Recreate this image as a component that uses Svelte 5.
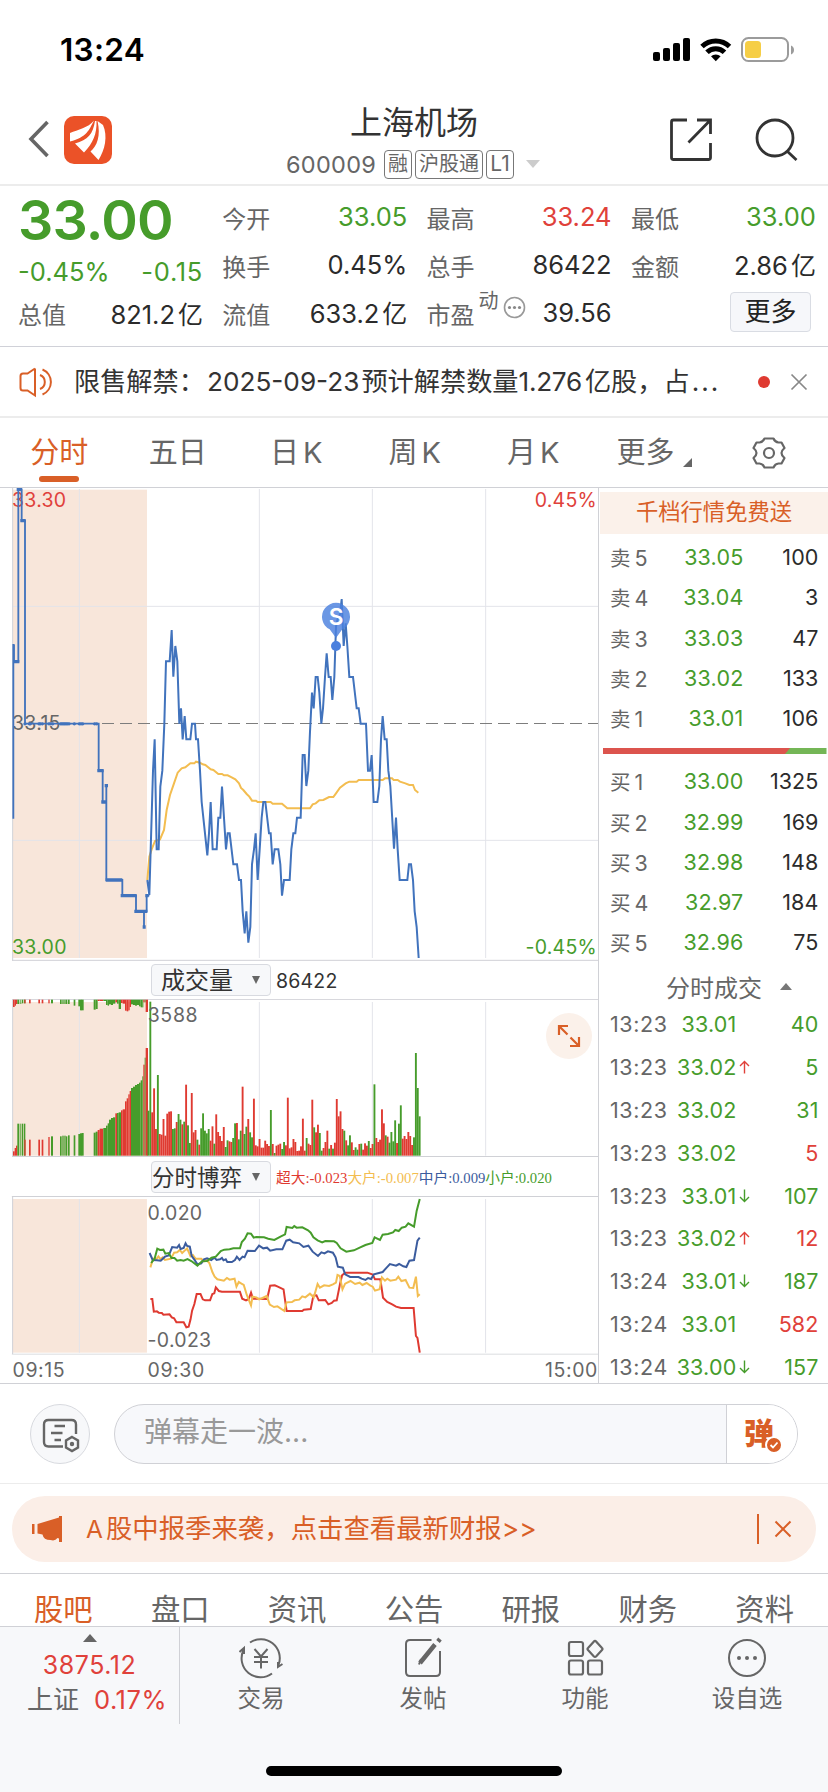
<script>
  const quotes = [
    [['今开', '33.05', 'down'], ['最高', '33.24', 'up'], ['最低', '33.00', 'down']],
    [['换手', '0.45%', ''], ['总手', '86422', ''], ['金额', '2.86亿', '']]
  ];
  const periods = ['分时', '五日', '日K', '周K', '月K'];
  const asks = [['卖5', '33.05', 100], ['卖4', '33.04', 3], ['卖3', '33.03', 47], ['卖2', '33.02', 133], ['卖1', '33.01', 106]];
  const bids = [['买1', '33.00', 1325], ['买2', '32.99', 169], ['买3', '32.98', 148], ['买4', '32.97', 184], ['买5', '32.96', 75]];
  const trades = [
    ['13:23', '33.01', '', 40, 'down'],
    ['13:23', '33.02', 'u', 5, 'down'],
    ['13:23', '33.02', '', 31, 'down'],
    ['13:23', '33.02', '', 5, 'up'],
    ['13:23', '33.01', 'd', 107, 'down'],
    ['13:23', '33.02', 'u', 12, 'up'],
    ['13:24', '33.01', 'd', 187, 'down'],
    ['13:24', '33.01', '', 582, 'up'],
    ['13:24', '33.00', 'd', 157, 'down']
  ];
  const sections = ['股吧', '盘口', '资讯', '公告', '研报', '财务', '资料'];

  const auctionPath = 'M40 1016V495H44M42 495V545H55V28H65V122H75V731H296V872H308V966H319V917V1200H367V1247H408V1294H432V1341V1294H440V1247H448';
  const auctionTicks = 'M50 28H66M61 122H77M40 545H58M292 872H311M304 966H320M314 917H324M317 1200H367M362 1247H410M403 1294H442M428 1341H437M436 1247H446';
  const dots = [75, 88, 91, 117, 121, 127, 147, 152, 158, 182, 186, 190, 194, 198, 202, 207, 223, 238, 243, 248, 284, 290];
  const priceLine =
    '442,1200 448,1245 459,872 464,778 470,1108 476,1108 481,920 487,872 493,731 498,544 509,544 515,450 520,590 526,498 532,544 538,731 543,685 548,778 554,708 559,778 571,778 576,731 585,731 588,778 594,778 600,872 605,966 622,1126 627,1060 632,966 638,1108 650,1108 655,1013 661,1013 666,920 678,1108 683,1060 689,1060 700,1153 711,1153 717,1200 723,1200 728,1294 734,1360 739,1294 745,1388 751,1341 756,1153 762,1108 767,1060 773,1200 779,1108 785,1013 790,966 796,966 807,1060 812,1060 818,1153 824,1108 835,1108 841,1153 846,1247 852,1200 869,1200 874,1108 880,1060 886,1060 891,1013 902,1013 908,825 914,825 919,918 925,872 930,755 936,638 941,685 947,591 953,591 958,638 964,731 969,685 975,591 980,520 986,591 992,591 997,660 1003,591 1008,440 1014,412 1020,404 1025,357 1031,498 1037,430 1042,498 1048,591 1059,591 1070,685 1076,685 1082,731 1098,731 1104,872 1110,872 1115,825 1121,966 1132,966 1138,918 1143,778 1148,708 1154,778 1160,778 1165,872 1171,918 1182,1106 1188,1013 1193,1108 1199,1200 1222,1200 1227,1153 1233,1153 1239,1200 1244,1294 1250,1341 1256,1434';
  const averageLine =
    '442,1200 448,1130 455,1108 465,1083 480,1078 492,1050 500,990 510,945 522,910 533,878 545,865 556,862 571,850 583,850 588,845 600,848 608,853 616,855 632,868 640,870 655,882 666,882 672,886 683,886 695,892 706,898 717,910 723,924 730,930 740,942 748,950 756,962 768,962 773,966 812,966 818,971 846,971 862,985 930,985 938,973 947,970 958,961 970,960 987,951 1000,951 1008,940 1020,923 1037,910 1048,905 1070,905 1076,900 1148,900 1155,895 1176,895 1181,900 1193,900 1200,905 1216,910 1228,915 1239,915 1245,930 1255,938';

  const volumes =
    'g483 g156 r488 r416 r538 g376 r553 r555 r508 r558 r492 r486 r485 g538 g536 r517 g493 g510 r524 g516 r405 g527 g580 r430 r548 r541 g570 r585 g536 g491 g543 g551 g538 r573 r530 g582 r494 r547 r559 r574 r532 g592 g572 r575 r577 g565 g521 r520 g569 g543 r411 g553 g531 r508 g548 g563 r447 r587 r590 r568 r594 r594 r573 r583 r589 g481 r583 g610 r588 r585 r582 g598 g577 r587 r444 r596 r593 r568 r577 r604 r603 r590 r507 r603 g565 r582 r586 r450 g533 r548 r525 g550 g603 r595 r577 r543 g597 r586 g597 r579 r448 r500 r485 r538 g543 r572 g587 g557 r578 r601 g593 g600 r583 g582 r600 r581 r588 g574 r595 r583 g404 r565 r577 r570 r479 r521 g557 r561 g579 g547 g575 g512 r580 g522 g467 r567 r559 r568 r547 r559 r586 g563 g310 g415 g500'.split(' ');

  // Auction bars: [colour, left, width, top of the lower bar, end of the hanging bar]
  const auction = [
    ['r', 39, 5, 605, 172], ['r', 44, 4, 595, 168], ['r', 48, 4, 588, 163],
    ['g', 52, 6, 522, 163], ['g', 61, 3, 522, 163], ['g', 66, 3, 522, 161], ['g', 71, 5, 522, 161],
    ['r', 73, 4, 570, 161], ['r', 87, 5, 570, 161], ['r', 115, 5, 570, 161], ['r', 125, 5, 570, 161], ['r', 145, 4, 562, 161],
    ['g', 153, 6, 560, 161], ['g', 180, 5, 560, 163], ['g', 187, 4, 558, 163], ['g', 193, 4, 558, 163], ['g', 198, 4, 560, 163], ['g', 204, 5, 557, 163],
    ['g', 221, 5, 557, 168], ['g', 235, 5, 553, 170], ['g', 240, 6, 551, 182], ['g', 245, 6, 550, 182],
    ['g', 281, 6, 549, 180], ['g', 287, 6, 546, 178], ['r', 293, 6, 541, 154], ['r', 299, 11, 537, 154],
    ['g', 310, 8, 535, 154], ['g', 318, 5, 528, 166], ['g', 323, 4, 521, 168], ['g', 327, 6, 510, 164], ['g', 333, 6, 505, 166], ['g', 339, 7, 503, 162],
    ['r', 346, 5, 491, 158], ['g', 351, 5, 490, 162], ['g', 356, 7, 488, 178], ['r', 363, 5, 482, 160], ['r', 368, 7, 479, 162],
    ['r', 375, 5, 455, 183], ['r', 380, 5, 446, 185], ['r', 385, 4, 434, 182], ['r', 389, 4, 424, 172],
    ['g', 393, 6, 415, 164], ['g', 399, 6, 411, 166], ['g', 405, 6, 406, 168], ['g', 411, 6, 403, 166], ['g', 417, 5, 399, 170], ['g', 422, 5, 392, 173],
    ['g', 427, 3, 380, 173], ['r', 430, 4, 345, 158], ['g', 434, 3, 324, 158], ['r', 437, 7, 295, 187]
  ];
  const tone = { r: '#df3a31', g: '#469c2b' };

  const flows = [
    ['#df3a31', '393,357 398,357 402,395 410,394 415,398 423,399 427,404 443,403 449,412 455,415 461,427 480,427 487,442 493,440 498,418 502,392 508,372 514,342 524,342 530,358 536,361 549,361 555,342 560,340 564,322 572,333 580,335 627,335 633,356 643,361 650,357 656,338 661,356 698,357 706,317 718,316 726,320 741,328 749,393 790,393 794,389 812,387 819,347 827,346 833,361 850,360 858,373 867,369 873,362 880,361 889,310 894,286 902,278 960,278 974,284 980,298 994,298 1001,353 1012,366 1025,373 1035,380 1048,384 1081,384 1087,468 1091,474 1097,518'],
    ['#f3bd50', '393,262 400,236 408,238 414,229 419,237 425,232 431,240 447,236 455,218 463,217 470,210 476,219 489,205 498,229 504,225 511,236 526,236 533,244 540,240 547,249 555,276 561,290 568,298 585,302 593,294 600,299 613,296 618,320 624,306 631,311 637,315 645,345 656,376 660,350 670,352 677,358 686,354 697,348 705,374 716,381 725,379 743,393 749,367 763,366 770,361 782,359 790,349 798,352 810,341 820,352 830,312 836,323 847,316 860,318 870,313 878,308 882,285 888,288 895,328 902,311 916,303 928,312 940,308 947,315 958,309 968,317 974,320 980,332 992,328 998,292 1006,302 1012,296 1020,302 1035,299 1041,290 1049,303 1060,300 1070,323 1080,324 1087,290 1092,348 1097,343'],
    ['#3b5c9e', '391,219 399,240 410,241 420,242 431,230 441,226 450,201 463,203 468,195 472,207 480,204 485,190 489,198 496,200 501,228 508,239 516,253 526,250 533,238 541,235 552,240 560,233 566,240 575,238 580,234 584,241 590,238 594,246 606,246 614,240 619,230 626,240 634,230 639,232 647,212 666,213 677,197 688,205 698,203 706,212 722,208 738,208 748,182 757,179 766,187 782,190 793,201 806,197 817,215 831,228 840,217 848,220 857,214 870,218 877,232 883,260 896,263 902,283 915,291 937,291 945,296 955,300 962,294 970,297 977,283 1000,276 1011,262 1019,252 1035,257 1043,252 1054,259 1062,261 1070,242 1082,240 1091,182 1097,173'],
    ['#469c2b', '395,249 404,236 411,206 418,210 427,209 432,221 441,219 448,234 456,234 463,242 472,240 480,242 490,237 500,243 516,257 528,244 541,243 553,233 564,230 577,213 586,209 600,208 610,205 627,205 632,186 640,176 647,160 656,161 663,173 670,171 690,172 701,176 717,180 733,170 745,163 749,141 764,144 769,138 775,143 790,142 805,151 812,158 819,172 830,181 842,187 850,183 873,184 880,189 890,205 905,215 925,211 940,203 955,195 973,189 979,172 993,180 1000,164 1014,162 1027,157 1033,150 1042,153 1050,143 1060,140 1067,130 1082,140 1089,92 1097,57']
  ];
</script>

<div class="screen">
  <div class="status">
    <span class="clock">13:24</span>
    <svg width="144" height="28" viewBox="652 36 144 28">
      <rect x="653" y="52" width="7" height="9" rx="2" /><rect x="663" y="48" width="7" height="13" rx="2" />
      <rect x="673" y="43" width="7" height="18" rx="2" /><rect x="683" y="38" width="7" height="23" rx="2" />
      <g fill="none" stroke="#000" stroke-width="5"><path d="M702 46.500A20 20 0 0 1 729.500 46.500" /><path d="M707 52.200A12.500 12.500 0 0 1 724.500 52.200" /></g>
      <path d="M711 56.300a7 7 0 0 1 9.600 0L715.800 61.300z" />
      <rect x="742" y="38" width="46" height="23" rx="6.500" fill="none" stroke="#9b9b9b" stroke-width="2" />
      <rect x="745" y="41" width="16" height="17" rx="3.500" fill="#f6ce46" /><path d="M791 45.500c4 1.500 4 7.500 0 9z" fill="#9b9b9b" />
    </svg>
  </div>

  <header>
    <svg class="back" width="22" height="38" viewBox="0 0 22 38"><path d="M19.500 2L3 19 19.500 36" fill="none" stroke="#666" stroke-width="3.600" /></svg>
    <svg class="logo" width="48" height="48" viewBox="0 0 48 48">
      <rect width="48" height="48" rx="10" fill="#eb5228" />
      <path fill="#fff" d="M6 17C14 13.500 24 12 30 4.500C25 14 23 21 6 25.500zM31 5C29 18 24 24 11 27.500L20 36.500C29 27 33 18 32.500 5zM33.500 5C37 20 33 30 26.500 35.500L34.500 44C41 34 44 20 39 9z" />
    </svg>
    <div class="title">
      <h1>上海机场</h1>
      <div class="code"><span>600009</span><b>融</b><b>沪股通</b><b class="lv">L1</b><i></i></div>
    </div>
    <svg class="share" width="46" height="46" viewBox="668 117 46 46" fill="none" stroke="#333" stroke-width="2.800">
      <path d="M687 120H673.500Q671.500 120 671.500 122V157.500Q671.500 159.500 673.500 159.500H708.500Q710.500 159.500 710.500 157.500V143M697 120H710.500V134M710 120.500L688.500 142.500" />
    </svg>
    <svg class="search" width="44" height="44" viewBox="755 118 44 44" fill="none" stroke="#333" stroke-width="2.800"><circle cx="775" cy="138" r="18" /><path d="M787.500 151.500L796.500 160" /></svg>
  </header>

  <section class="quote">
    <div class="col">
      <div class="price">33.00</div>
      <div class="cell change down"><span>-0.45%</span><span class="diff">-0.15</span></div>
      <div class="cell"><label>总值</label><span>821.2<em>亿</em></span></div>
    </div>
    {#each [0, 1, 2] as c}
      <div class="col">
        {#each quotes as row}
          <div class="cell"><label>{row[c][0]}</label><span class={row[c][2]}>{row[c][1].replace('亿', '')}{#if row[c][1].endsWith('亿')}<em>亿</em>{/if}</span></div>
        {/each}
        {#if c === 0}
          <div class="cell"><label>流值</label><span>633.2<em>亿</em></span></div>
        {:else if c === 1}
          <div class="cell"><label class="pe">市盈<sup>动</sup><svg width="23" height="23" viewBox="0 0 23 23"><circle cx="11.500" cy="11.500" r="10" fill="none" stroke="#999" stroke-width="1.600" /><g fill="#888"><circle cx="6.500" cy="11.500" r="1.600" /><circle cx="11.500" cy="11.500" r="1.600" /><circle cx="16.500" cy="11.500" r="1.600" /></g></svg></label><span>39.56</span></div>
        {:else}
          <div class="cell end"><button>更多</button></div>
        {/if}
      </div>
    {/each}
  </section>

  <section class="notice">
    <svg width="36" height="32" viewBox="18 365 36 32" fill="none" stroke="#d95f27" stroke-width="2">
      <path d="M35 367.500V394.500L27.500 389.500H23Q20.500 389.500 20.500 387V375Q20.500 372.500 23 372.500H27.500L35 367.500M40 374A7.500 7.500 0 0 1 40 388M42.500 368.500A13.500 13.500 0 0 1 42.500 393.500" />
    </svg>
    <p>限售解禁：<span>2025-09-23</span>预计解禁数量<span class="amount">1.276</span>亿股，占<span class="dots">...</span></p>
    <i></i>
    <svg width="18" height="18" viewBox="0 0 18 18"><path d="M1.500 1.500L16.500 16.500M16.500 1.500L1.500 16.500" stroke="#888" stroke-width="1.700" /></svg>
  </section>

  <nav class="periods">
    {#each periods as p, i}
      <span class:on={i === 0}>{p.replace('K', '')}{#if p.endsWith('K')}<em>K</em>{/if}</span>
    {/each}
    <span class="more">更多<svg width="9" height="9" viewBox="0 0 9 9"><path d="M9 0V9H0z" fill="#666" /></svg></span>
    <svg class="gear" width="34" height="34" viewBox="-17 -17 34 34" fill="none" stroke="#666" stroke-width="2.200">
      <path d="M-4.500-14.500H4.500Q6-10.800 9.500-10.500L12.500-10.500 15.500-5Q12.500-2.500 12.500 0T15.500 5L12.500 10.500 9.500 10.500Q6 10.800 4.500 14.500H-4.500Q-6 10.800-9.500 10.500L-12.500 10.500-15.500 5Q-12.500 2.500-12.500 0T-15.500-5L-12.500-10.500-9.500-10.500Q-6-10.800-4.500-14.500z" stroke-linejoin="round" /><circle r="5" />
    </svg>
  </nav>

  <main>
    <div class="charts">
      <svg class="plot" width="598" height="473" viewBox="0 24 1794 1419">
        <rect x="39" y="29" width="402" height="1405" fill="#f8e6da" />
        <path d="M238 27V1434M778 27V1434M1117 27V1434M1457 27V1434M39 379H1794M39 1081H1794" fill="none" stroke="#e3e4ea" stroke-width="3" />
        <path d="M38 24V1442M36 1441H1794" stroke="#d0d1d6" stroke-width="3" />
        <path d="M306 730.500H1794" stroke="#7d7d7d" stroke-width="3.600" stroke-dasharray="36 18" />
        <g font-size="58.500" letter-spacing=".8">
          <text x="36" y="81" fill="#e0413a">33.30</text><text x="36" y="751" fill="#666">33.15</text><text x="36" y="1421" fill="#469c2b">33.00</text>
          <text x="1791" y="81" fill="#e0413a" text-anchor="end">0.45%</text><text x="1791" y="1421" fill="#469c2b" text-anchor="end">-0.45%</text>
        </g>
        <polyline points={averageLine} fill="none" stroke="#f3bd50" stroke-width="6" />
        <path d={auctionPath} fill="none" stroke="#4173bd" stroke-width="5.500" />
        <path d={auctionTicks} fill="none" stroke="#4173bd" stroke-width="10" />
        {#each dots as x}<circle cx={x} cy="731.500" r="5" fill="#4173bd" />{/each}
        <polyline points={priceLine} fill="none" stroke="#4173bd" stroke-width="6" />
        <g fill="#4a80de">
          <path d="M1008 474L989 448A42 42 0 1 1 1027 448z" opacity=".82" /><circle cx="1008" cy="498" r="15" />
        </g>
        <text x="1008" y="434" font-size="68" font-weight="600" fill="#fff" text-anchor="middle">S</text>
      </svg>

      <div class="bar"><div class="pick">成交量<i></i></div><span class="total">86422</span></div>

      <div class="layer">
        <svg class="plot" width="598" height="158" viewBox="0 148 1794 474">
          <rect x="39" y="157" width="402" height="461" fill="#f8e6da" />
          <path d="M238 157V618M778 157V618M1117 157V618M1457 157V618" stroke="#e3e4ea" stroke-width="3" />
          <path d="M36 149H1794M38 148V622M36 620.500H1794" stroke="#d0d1d6" stroke-width="3" />
          {#each auction as [k, x, w, top, end]}
            <rect {x} y={top} width={w} height={618 - top} fill={tone[k]} /><rect {x} y="150" width={w} height={end - 150} fill={tone[k]} />
          {/each}
          {#each volumes as v, i}
            <rect x={442.500 + i * 5.650} y={+v.slice(1)} width="5.650" height={618 - +v.slice(1)} fill={tone[v[0]]} />
          {/each}
          <text x="443" y="216" font-size="58.500" letter-spacing="2" fill="#666">3588</text>
        </svg>
        <div class="expand"><svg width="24" height="24" viewBox="0 0 24 24" fill="none" stroke="#d95f27" stroke-width="2.200"><path d="M2 11V2H11M2 2L10.500 10.500M22 13V22H13M22 22L13.500 13.500" /></svg></div>
      </div>

      <div class="bar second"><div class="pick tight">分时博弈<i></i></div><span class="legend"><b class="c0">超大:-0.023</b><b class="c1">大户:-0.007</b><b class="c2">中户:0.009</b><b class="c3">小户:0.020</b></span></div>

      <div class="layer">
        <svg class="plot" width="598" height="159" viewBox="0 48 1562.800 477" preserveAspectRatio="none">
          <rect x="34" y="57" width="350" height="461" fill="#f8e6da" />
          <g fill="none">
            <path d="M207.500 57V518M678 57V518M973 57V518M1269 57V518" stroke="#e3e4ea" stroke-width="2.700" />
            <path d="M31 49.500H1563M33 48V522M31 522.500H1563" stroke="#d0d1d6" stroke-width="2.700" />
          </g>
          {#each flows as [color, points]}
            <polyline {points} fill="none" stroke={color} stroke-width="2" vector-effect="non-scaling-stroke" />
          {/each}
        </svg>
        <span class="hi">0.020</span><span class="lo">-0.023</span>
      </div>
      <div class="axis"><span>09:15</span><span>09:30</span><span>15:00</span></div>
    </div>

    <aside>
      <div class="promo">千档行情免费送</div>
      <div class="book">
        {#each asks as [n, p, v]}<div><span>{n[0]}<em>{n[1]}</em></span><b>{p}</b><i>{v}</i></div>{/each}
      </div>
      <svg class="ratio" width="225" height="6"><path d="M0 0H223.500V6H0z" fill="#74b656" /><path d="M0 0H187L182 6H0z" fill="#dc544d" /></svg>
      <div class="book">
        {#each bids as [n, p, v]}<div><span>{n[0]}<em>{n[1]}</em></span><b>{p}</b><i>{v}</i></div>{/each}
      </div>
      <div class="deals">分时成交<i></i></div>
      <div class="trades">
        {#each trades as [t, p, dir, v, side]}
          <div><span>{t}</span><b>{p}</b>
            <svg width="11" height="14" viewBox="0 0 11 14" fill="none" stroke-width="1.400">
              {#if dir === 'u'}<path d="M5.500 13.500V2M1 6L5.500 1.500 10 6" stroke="#e0413a" />{:else if dir === 'd'}<path d="M5.500 0.500V12M1 8L5.500 12.500 10 8" stroke="#469c2b" />{/if}
            </svg>
            <i class={side}>{v}</i></div>
        {/each}
      </div>
    </aside>
  </main>

  <section class="danmaku">
    <div class="setting">
      <svg width="40" height="40" viewBox="40 1414 40 40" fill="none" stroke="#666" stroke-width="2.400">
        <path d="M63 1446.500H48.500Q44 1446.500 44 1442V1424.500Q44 1420 48.500 1420H71.500Q76 1420 76 1424.500V1434M54.500 1426H65M51 1433H62.500M54.500 1440H61" />
        <path d="M72 1437L78 1440.500V1447.500L72 1451 66 1447.500V1440.500z" /><circle cx="72" cy="1444" r="1" />
      </svg>
    </div>
    <div class="input"><span>弹幕走一波...</span>
      <div class="toggle">弹<svg width="18" height="18" viewBox="-9 -9 18 18"><circle r="8" fill="#d95f27" stroke="#fff" stroke-width="2" /><path d="M-3.500 0L-1 2.500 3.500-2.500" fill="none" stroke="#fff" stroke-width="1.800" /></svg></div>
    </div>
  </section>

  <section class="promobar">
    <div>
      <svg width="32" height="28" viewBox="31 1515 32 28" fill="#d95f27"><path d="M32 1524H34.500V1534H32zM37.500 1524L59 1517.500V1516H62V1542H59V1538.500L57.500 1538Q55 1541.500 50.500 1540Q43.500 1540 42.500 1534.500L37.500 1533.500z" /></svg>
      <p><em>A</em>股中报季来袭，点击查看最新财报<span>&gt;&gt;</span></p>
      <i></i>
      <svg width="18" height="18" viewBox="0 0 18 18"><path d="M1.500 1.500L16.500 16.500M16.500 1.500L1.500 16.500" stroke="#d95f27" stroke-width="2" /></svg>
    </div>
  </section>

  <nav class="sections">
    {#each sections as s, i}<span class:on={i === 0}>{s}</span>{/each}
  </nav>

  <footer>
    <div class="actions">
      <div class="index"><i></i><b>3875.12</b><p>上证<b>0.17%</b></p></div>
      <div class="act">
        <svg width="44" height="42" viewBox="-22 -21 44 42" fill="none" stroke="#666" stroke-width="2">
          <path d="M-11-15.500A19 19 0 0 1 17.500 7M21.500 6L17 9V4M11 15.500A19 19 0 0 1-17.500-8M-21.500-6L-17-10V-4M-6.500-9L0-1.500 6.500-9M0-1.500V10.500M-7-1H7M-7 4H7" />
        </svg><span>交易</span>
      </div>
      <div class="act">
        <svg width="44" height="42" viewBox="-22 -21 44 42" fill="none" stroke="#666" stroke-width="2">
          <path d="M8.500-18H-13Q-17-18-17-14V14Q-17 18-13 18H13Q17 18 17 14V-7" /><path d="M-3 5L12-13.500M15-16.500L17-19" stroke-width="4.500" /><path d="M-4 6.500L-2 1" />
        </svg><span>发帖</span>
      </div>
      <div class="act">
        <svg width="44" height="42" viewBox="-22 -21 44 42" fill="none" stroke="#666" stroke-width="2.200">
          <rect x="-16" y="-16" width="14" height="14" rx="2" /><rect x="-16" y="2.500" width="14" height="14" rx="2" /><rect x="3" y="2.500" width="14" height="14" rx="2" /><path d="M8.700-16.300Q10-17.800 11.300-16.300L17-10Q18-9 17-8L11.300-1.800Q10-.5 8.700-1.800L3-8Q2-9 3-10z" />
        </svg><span>功能</span>
      </div>
      <div class="act">
        <svg width="44" height="42" viewBox="-22 -21 44 42"><circle r="18" fill="none" stroke="#666" stroke-width="2" /><g fill="#666"><circle cx="-8" r="2" /><circle r="2" /><circle cx="8" r="2" /></g></svg><span>设自选</span>
      </div>
    </div>
    <div class="home"></div>
  </footer>
</div>

<style>
  * { box-sizing: border-box; }
  .screen { width: 828px; height: 1792px; display: flex; flex-direction: column; overflow: hidden; background: #fff; font-family: Inter, 'Noto Sans CJK SC', sans-serif; color: #2b2b2b; }
  svg { display: block; flex: none; }
  em, i { font-style: normal; }
  b { font-weight: 400; }
  h1, p { margin: 0; font-weight: 400; }
  .up { color: #e0413a; }
  .down { color: #469c2b; }

  .status { height: 100px; display: flex; justify-content: space-between; align-items: flex-start; padding: 36px 32px 0 60px; color: #000; }
  .clock { font-size: 31.500px; line-height: 28px; font-weight: 600; letter-spacing: .3px; }

  header { height: 86px; border-bottom: 2px solid #ececec; display: flex; align-items: flex-start; padding-left: 28px; }
  .back { margin-top: 20px; }
  .logo { margin: 16px 0 0 14px; }
  .title { width: 326px; margin: 4px 0 0 138px; }
  h1 { width: 328px; text-align: center; font-size: 32px; line-height: 38px; color: #333; }
  .code { display: flex; align-items: center; height: 30px; margin-top: 7px; margin-left: 36px; color: #666; font-size: 23.500px; white-space: nowrap; }
  .code span { width: 98px; letter-spacing: .3px; }
  .code b { height: 29px; border: 1.500px solid #777; border-radius: 4px; padding: 0 3px; font-size: 20px; line-height: 26px; margin-right: 3px; }
  .code .lv { font-size: 21px; width: 28px; text-align: center; padding: 0; }
  .code i { border: 7px solid transparent; border-top: 8px solid #ccc; border-bottom: 0; margin-left: 9px; }
  .share { margin: 17px 0 0 92px; }
  .search { margin: 18px 0 0 41px; }

  .quote { height: 161px; border-bottom: 1px solid #d0d1d8; display: grid; grid-template-columns: repeat(4, 185px); column-gap: 19.300px; padding: 6px 0 0 18px; }
  .col { display: flex; flex-direction: column; }
  .price { height: 55px; font-size: 55.500px; line-height: 55px; font-weight: 600; color: #469c2b; letter-spacing: -.8px; }
  .cell { height: 48px; display: flex; justify-content: space-between; align-items: center; font-size: 25.500px; white-space: nowrap; }
  .cell label { font-size: 24px; color: #666; position: relative; top: 1px; }
  .cell em { font-size: 25px; margin-left: 3px; }
  .col:first-child .cell { height: 41px; }
  .col:first-child .change { margin-top: 4px; }
  .diff { letter-spacing: .7px; }
  .pe { display: flex; align-items: center; }
  .pe sup { font-size: 20px; line-height: 20px; margin: -24px 4px 0 4px; }
  .pe svg { margin-top: -11px; }
  .end { justify-content: flex-end; padding-right: 5px; }
  button { width: 81px; height: 40px; margin-top: -1px; padding: 0; border: 1.500px solid #d9dce3; border-radius: 4px; background: #f6f7fa; color: #222; font: 26px/34px Inter, 'Noto Sans CJK SC', sans-serif; }

  .notice { height: 71px; border-bottom: 2px solid #ececec; display: flex; align-items: center; padding-left: 18px; }
  .notice p { width: 650px; margin-left: 20px; font-size: 26.200px; line-height: 40px; color: #333; white-space: nowrap; }
  .notice p span { margin: 0 2px; }
  .notice p .amount { margin: 0 3px 0 0; letter-spacing: -.3px; }
  .notice p .dots { letter-spacing: 2px; }
  .notice i { width: 12px; height: 12px; border-radius: 50%; background: #df3a31; margin: 0 20px 0 34px; }

  .periods { height: 70px; border-bottom: 1px solid #d0d1d6; display: flex; align-items: center; color: #666; font-size: 29px; }
  .periods span { position: relative; width: 118.500px; text-align: center; line-height: 68px; }
  .periods em { margin-left: 4px; font-size: 29px; }
  .periods .on { color: #d95f27; }
  .periods .on::after { content: ''; position: absolute; left: 39px; bottom: 5px; width: 40px; height: 6px; border-radius: 3px; background: #d95f27; }
  .periods .more { margin-left: 14px; text-align: left; padding-left: 10px; display: flex; align-items: center; }
  .more svg { margin: 20px 0 0 8px; }
  .gear { margin-left: 27px; }

  main { height: 896px; border-bottom: 1px solid #d0d1d6; display: flex; overflow: hidden; }
  .charts { width: 599px; border-right: 1px solid #d0d1d6; }
  .bar { height: 38px; display: flex; align-items: center; padding-left: 151px; }
  .bar.second { height: 39px; }
  .pick { width: 120px; height: 32px; border: 1.500px solid #d8dae0; border-radius: 4px; background: #f7f8fa; font-size: 24px; line-height: 28px; padding: 2px 10px 0 9px; color: #333; display: flex; align-items: center; white-space: nowrap; justify-content: space-between; }
  .pick.tight { padding-left: 0; font-size: 22.500px; }
  .pick i { border: 4.500px solid transparent; border-top: 8px solid #666; border-bottom: 0; margin-top: -2px; }
  .total { font-size: 19.500px; margin: 2px 0 0 5px; color: #333; letter-spacing: .2px; }
  .legend { display: flex; margin-left: 5px; font: 14.700px 'Liberation Serif', 'Noto Sans CJK SC', serif; white-space: nowrap; }
  .c0 { color: #df3a31; } .c1 { color: #f3bd50; } .c2 { color: #3b5c9e; } .c3 { color: #469c2b; }
  .layer { position: relative; }
  .expand { position: absolute; left: 546px; top: 14px; width: 46px; height: 46px; border-radius: 50%; background: #fbf1ea; display: grid; place-items: center; }
  .hi, .lo { position: absolute; left: 147.500px; font-size: 19.500px; line-height: 20px; color: #666; letter-spacing: .3px; }
  .hi { top: 6.500px; }
  .lo { bottom: 5px; }
  .axis { height: 28px; display: flex; padding-left: 12.500px; font-size: 19.500px; line-height: 30px; color: #666; letter-spacing: .6px; }
  .axis span { width: 135px; }
  .axis span:last-child { flex: 1; text-align: right; }

  aside { width: 229px; }
  .promo { margin: 4px 0 3px 1px; height: 42px; background: #fbf1ea; color: #d95f27; font-size: 22.300px; line-height: 39px; text-align: center; }
  .book div { height: 40.250px; display: grid; grid-template-columns: 60px 73.500px 75px; padding-left: 11px; align-items: center; font-size: 21.500px; white-space: nowrap; }
  .book span { color: #666; font-size: 20.500px; }
  .book em { margin-left: 4px; font-size: 21.500px; }
  .book b { color: #469c2b; text-align: right; letter-spacing: .2px; }
  .book i, .trades i { text-align: right; letter-spacing: .1px; }
  .ratio { margin: 10px 0 7px 4px; }
  .deals { height: 48px; padding-left: 67px; display: flex; align-items: center; font-size: 24px; color: #666; }
  .deals i { border: 6px solid transparent; border-bottom: 7px solid #777; border-top: 0; margin-left: 18px; }
  .trades { margin-top: -8px; }
  .trades div { height: 42.900px; display: grid; grid-template-columns: 59px 67.500px 13px 69px; padding-left: 11px; align-items: center; font-size: 21.500px; }
  .trades span { color: #666; letter-spacing: .6px; }
  .trades b { color: #469c2b; text-align: right; letter-spacing: .2px; }
  .trades svg { margin-left: 2px; }

  .danmaku { height: 100px; border-bottom: 1px solid #ececec; display: flex; align-items: center; padding-left: 30px; }
  .setting { width: 60px; height: 60px; border-radius: 50%; border: 1px solid #d8dadf; background: #f7f8fa; display: grid; place-items: center; }
  .input { margin-left: 24px; width: 684px; height: 60px; border: 1px solid #d0d1d6; border-radius: 30px; background: #f7f8fb; overflow: hidden; display: flex; justify-content: space-between; color: #999; font-size: 28px; line-height: 54px; padding-left: 29px; }
  .toggle { width: 71px; border-left: 1px solid #d0d1d6; background: #fff; color: #d95f27; font-size: 30px; line-height: 57px; font-weight: 900; padding-left: 17px; position: relative; }
  .toggle svg { position: absolute; left: 38px; top: 31px; }

  .promobar { height: 90px; border-bottom: 1px solid #d0d1d6; padding: 12px 12px 0; }
  .promobar div { height: 66px; border-radius: 33px; background: #fbeee7; color: #d95f27; display: flex; align-items: center; padding-left: 19px; }
  .promobar p { width: 671px; margin-left: 23px; font-size: 26.400px; line-height: 65px; white-space: nowrap; }
  .promobar em { margin-right: 3px; font-size: 24.500px; }
  .promobar i { width: 1.500px; height: 30px; background: #d95f27; margin-right: 15px; }

  .sections { height: 53px; border-bottom: 1px solid #d0d1d6; display: flex; justify-content: space-between; padding: 0 34px; font-size: 29.300px; line-height: 71px; color: #666; overflow: hidden; }
  .sections .on { color: #d95f27; }

  footer { flex: 1; background: #f7f8fa; }
  .actions { height: 97px; display: flex; }
  .index { width: 180px; border-right: 1px solid #d0d1d6; display: flex; flex-direction: column; align-items: center; }
  .index i { border: 7px solid transparent; border-bottom: 8px solid #666; border-top: 0; margin-top: 7px; }
  .index b { color: #e0413a; font-size: 25px; line-height: 34px; margin-top: 6px; letter-spacing: .5px; }
  .index p { font-size: 26px; line-height: 36px; color: #666; margin-left: 15px; white-space: nowrap; }
  .index p b { margin-left: 15px; font-size: 25.500px; }
  .act { width: 162px; display: flex; flex-direction: column; align-items: center; color: #666; font-size: 23.500px; line-height: 30px; }
  .act svg { margin: 10px 0 5px; }
  .home { width: 296px; height: 10px; border-radius: 5px; background: #000; margin: 42px auto 0; }
</style>
